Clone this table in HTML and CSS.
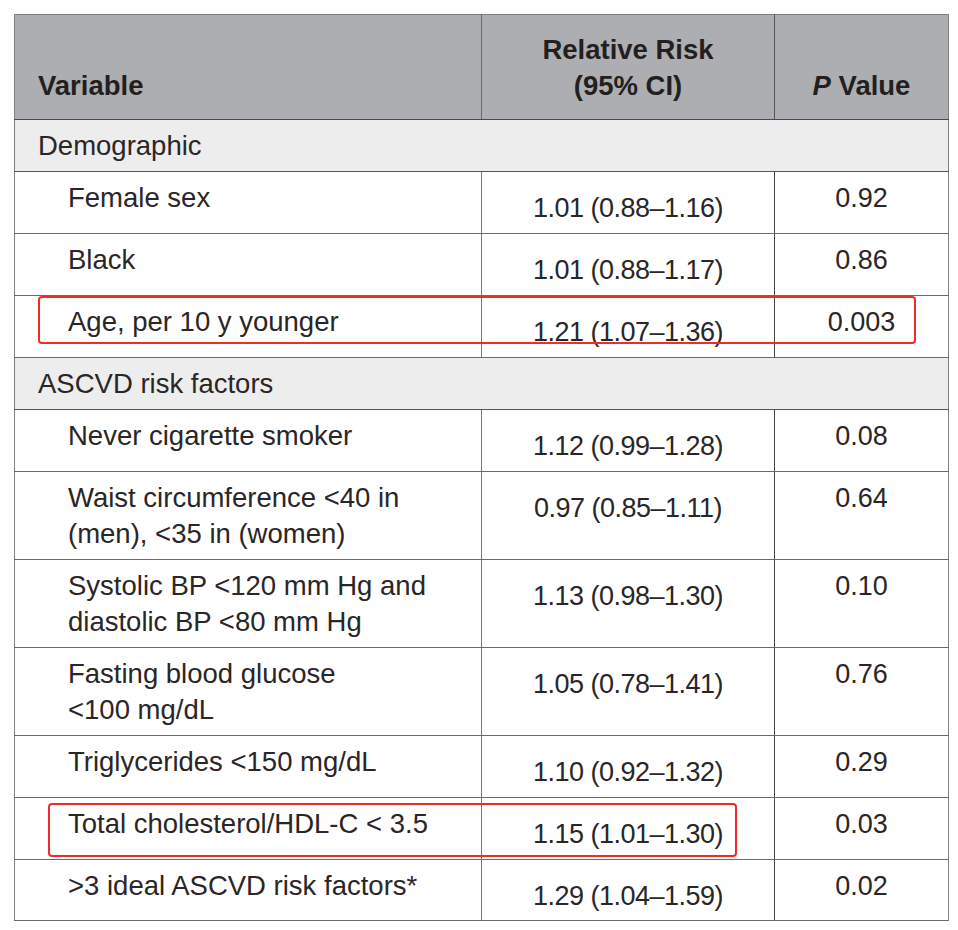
FILE: index.html
```html
<!DOCTYPE html>
<html lang="en">
<head>
<meta charset="utf-8">
<title>Relative Risk Table</title>
<link rel="stylesheet" href="styles.css">
</head>
<body>
<div class="page">
  <table class="risk">
    <colgroup>
      <col class="c-var">
      <col class="c-rr">
      <col class="c-p">
    </colgroup>
    <thead>
      <tr class="head">
        <th class="h-var">Variable</th>
        <th class="h-rr">Relative Risk<br>(95% CI)</th>
        <th class="h-p"><i>P</i> Value</th>
      </tr>
    </thead>
    <tbody>
      <tr class="section"><td colspan="3">Demographic</td></tr>
      <tr class="one"><td class="var">Female sex</td><td class="rr">1.01 (0.88–1.16)</td><td class="p">0.92</td></tr>
      <tr class="one"><td class="var">Black</td><td class="rr">1.01 (0.88–1.17)</td><td class="p">0.86</td></tr>
      <tr class="one"><td class="var">Age, per 10 y younger</td><td class="rr">1.21 (1.07–1.36)</td><td class="p">0.003</td></tr>
      <tr class="section"><td colspan="3">ASCVD risk factors</td></tr>
      <tr class="one"><td class="var">Never cigarette smoker</td><td class="rr">1.12 (0.99–1.28)</td><td class="p">0.08</td></tr>
      <tr class="two"><td class="var">Waist circumference &lt;40 in<br>(men), &lt;35 in (women)</td><td class="rr">0.97 (0.85–1.11)</td><td class="p">0.64</td></tr>
      <tr class="two"><td class="var">Systolic BP &lt;120 mm Hg and<br>diastolic BP &lt;80 mm Hg</td><td class="rr">1.13 (0.98–1.30)</td><td class="p">0.10</td></tr>
      <tr class="two"><td class="var">Fasting blood glucose<br>&lt;100 mg/dL</td><td class="rr">1.05 (0.78–1.41)</td><td class="p">0.76</td></tr>
      <tr class="one"><td class="var">Triglycerides &lt;150 mg/dL</td><td class="rr">1.10 (0.92–1.32)</td><td class="p">0.29</td></tr>
      <tr class="one"><td class="var">Total cholesterol/HDL-C &lt; 3.5</td><td class="rr">1.15 (1.01–1.30)</td><td class="p">0.03</td></tr>
      <tr class="one last"><td class="var">&gt;3 ideal ASCVD risk factors*</td><td class="rr">1.29 (1.04–1.59)</td><td class="p">0.02</td></tr>
    </tbody>
  </table>
  <div class="mark mark-age"></div>
  <div class="mark mark-chol"></div>
</div>
</body>
</html>
```

FILE: styles.css
```css
html, body {
  margin: 0;
  padding: 0;
  background: #ffffff;
}

.page {
  position: relative;
  padding: 14px 0 0 14px;
  width: 958px;
  height: 930px;
  box-sizing: border-box;
}

.risk {
  border-collapse: collapse;
  table-layout: fixed;
  width: 934px;
  font-family: "Liberation Sans", Arial, Helvetica, sans-serif;
  font-size: 27.5px;
  line-height: 36px;
  color: #2a2627;
  border: 1px solid #808080;
}

.c-var { width: 467px; }
.c-rr { width: 293px; }
.c-p { width: 174px; }

.risk th,
.risk td {
  padding: 0;
  box-sizing: border-box;
}

.head {
  height: 105px;
  background: #adaeb1;
}

.head th {
  vertical-align: bottom;
  padding-bottom: 15px;
  font-weight: bold;
  color: #231f20;
  border-bottom: 1px solid #4a4a4a;
}

.h-var {
  text-align: left;
  padding-left: 23px !important;
  border-right: 1px solid #6a6a6a;
}

.h-rr {
  text-align: center;
  border-right: 1px solid #555;
}

.h-p {
  text-align: center;
}

.section {
  height: 52px;
  background: #ededed;
}

.section td {
  vertical-align: top;
  padding-top: 8px;
  padding-left: 23px;
  border-bottom: 1px solid #555;
}

.one { height: 62px; }
.two { height: 88px; }
.last { height: 61px; }

.one td,
.two td {
  vertical-align: top;
  padding-top: 8px;
  border-bottom: 1px solid #6a6a6a;
}

.var {
  padding-left: 53px !important;
  border-right: 1px solid #7a7a7a;
}

.rr {
  text-align: center;
  font-size: 27px;
  letter-spacing: -0.5px;
  padding-top: 18px !important;
  border-right: 1px solid #444;
}

.p {
  text-align: center;
  font-size: 27px;
}

.mark {
  position: absolute;
  box-sizing: border-box;
  border: 2px solid #f42a2a;
  border-radius: 4px;
  pointer-events: none;
}

.mark-age {
  left: 38px;
  top: 296px;
  width: 878px;
  height: 48px;
}

.mark-chol {
  left: 48px;
  top: 803px;
  width: 689px;
  height: 54px;
}
```
